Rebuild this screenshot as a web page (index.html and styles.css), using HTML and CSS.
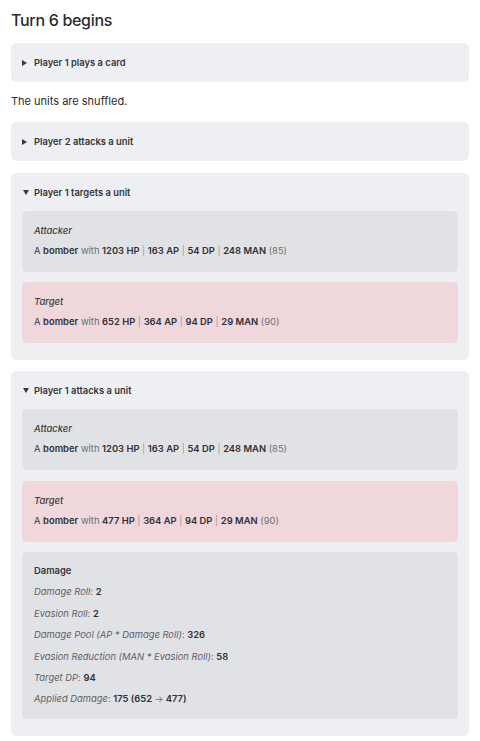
FILE: index.html
```html
<!DOCTYPE html>
<html>
<head>
<meta charset="utf-8">
<link rel="stylesheet" href="styles.css">
</head>
<body>
<h1 class="turn">Turn 6 begins</h1>

<div class="event">
  <div class="summary"><span class="tri closed"></span>Player 1 plays a card</div>
</div>

<p class="note">The units are shuffled.</p>

<div class="event">
  <div class="summary"><span class="tri closed"></span>Player 2 attacks a unit</div>
</div>

<div class="event open">
  <div class="summary"><span class="tri down"></span>Player 1 targets a unit</div>
  <div class="card">
    <div class="card-title">Attacker</div>
    <div class="unit">A <b>bomber</b> <span class="mute">with</span> <b>1203 HP</b> <span class="sep">|</span> <b>163 AP</b> <span class="sep">|</span> <b>54 DP</b> <span class="sep">|</span> <b>248 MAN</b> <span class="mute">(85)</span></div>
  </div>
  <div class="card target">
    <div class="card-title">Target</div>
    <div class="unit">A <b>bomber</b> <span class="mute">with</span> <b>652 HP</b> <span class="sep">|</span> <b>364 AP</b> <span class="sep">|</span> <b>94 DP</b> <span class="sep">|</span> <b>29 MAN</b> <span class="mute">(90)</span></div>
  </div>
</div>

<div class="event open">
  <div class="summary"><span class="tri down"></span>Player 1 attacks a unit</div>
  <div class="card">
    <div class="card-title">Attacker</div>
    <div class="unit">A <b>bomber</b> <span class="mute">with</span> <b>1203 HP</b> <span class="sep">|</span> <b>163 AP</b> <span class="sep">|</span> <b>54 DP</b> <span class="sep">|</span> <b>248 MAN</b> <span class="mute">(85)</span></div>
  </div>
  <div class="card target">
    <div class="card-title">Target</div>
    <div class="unit">A <b>bomber</b> <span class="mute">with</span> <b>477 HP</b> <span class="sep">|</span> <b>364 AP</b> <span class="sep">|</span> <b>94 DP</b> <span class="sep">|</span> <b>29 MAN</b> <span class="mute">(90)</span></div>
  </div>
  <div class="card damage">
    <div class="dmg-title">Damage</div>
    <div class="row"><i>Damage Roll</i><span class="mute">:</span> <b>2</b></div>
    <div class="row"><i>Evasion Roll</i><span class="mute">:</span> <b>2</b></div>
    <div class="row"><i>Damage Pool (AP * Damage Roll)</i><span class="mute">:</span> <b>326</b></div>
    <div class="row"><i>Evasion Reduction (MAN * Evasion Roll)</i><span class="mute">:</span> <b>58</b></div>
    <div class="row"><i>Target DP</i><span class="mute">:</span> <b>94</b></div>
    <div class="row"><i>Applied Damage</i><span class="mute">:</span> <b>175 (652 <span class="arrow">→</span> 477)</b></div>
  </div>
</div>
</body>
</html>
```

FILE: styles.css
```css
html, body {
  margin: 0;
  padding: 0;
  background: #ffffff;
}

body {
  padding: 0 11px;
  font-family: Inter, "Noto Sans", "Liberation Sans", sans-serif;
  color: #2f2f35;
}

.turn {
  margin: 0 0 13px;
  padding-top: 10px;
  font-size: 16px;
  line-height: 20px;
  font-weight: 500;
  letter-spacing: -0.3px;
  color: #2b2b30;
}

.event {
  background: #eeeff2;
  border-radius: 5px;
  padding: 13px 11px;
  display: flex;
  flex-direction: column;
  gap: 10.5px;
}

.event.open {
  padding-bottom: 16.5px;
}

.event + .event {
  margin-top: 11.5px;
}

.summary {
  display: flex;
  align-items: center;
  font-size: 9.4px;
  line-height: 13px;
  font-weight: 600;
  color: #35353b;
  margin-bottom: 1.5px;
}

.event:not(.open) .summary {
  margin-bottom: 0;
}

.tri {
  width: 0;
  height: 0;
}

.tri.closed {
  border-top: 3px solid transparent;
  border-bottom: 3px solid transparent;
  border-left: 5px solid #3a3a40;
  margin-right: 7px;
}

.tri.down {
  border-left: 3px solid transparent;
  border-right: 3px solid transparent;
  border-top: 5px solid #3a3a40;
  margin-left: 0.5px;
  margin-right: 5.5px;
}

.note {
  margin: 12px 0 14px;
  font-size: 11px;
  line-height: 14px;
  color: #2b2b30;
}

.card {
  background: #e1e2e6;
  border-radius: 5px;
  padding: 13px 12px 14px;
  font-size: 9.4px;
  line-height: 14px;
  display: flex;
  flex-direction: column;
  gap: 6px;
}

.card.target {
  background: #efd7dc;
}

.card-title {
  font-style: italic;
  font-weight: 500;
  color: #3a3a40;
}

.unit {
  color: #3a3a40;
}

.unit b,
.row b {
  font-weight: 600;
  color: #303036;
}

.mute {
  color: #6e6e74;
}

.sep {
  color: #a79a92;
}

.card.damage {
  gap: 7.4px;
  padding-top: 12px;
  padding-bottom: 13px;
}

.dmg-title {
  font-weight: 600;
  color: #35353b;
}

.row i {
  color: #5f5f66;
}

.arrow {
  font-weight: 400;
  color: #6e6e74;
}
```
